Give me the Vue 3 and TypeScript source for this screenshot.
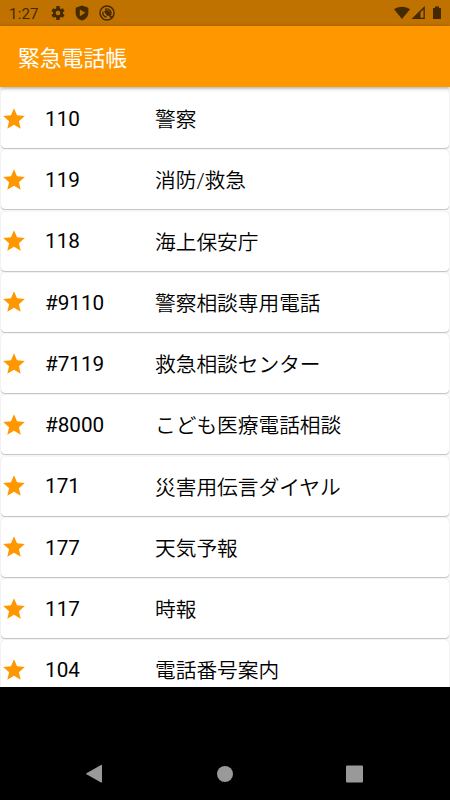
<script setup lang="ts">
interface Contact {
  number: string
  name: string
}

const contacts: Contact[] = [
  { number: '110', name: '警察' },
  { number: '119', name: '消防/救急' },
  { number: '118', name: '海上保安庁' },
  { number: '#9110', name: '警察相談専用電話' },
  { number: '#7119', name: '救急相談センター' },
  { number: '#8000', name: 'こども医療電話相談' },
  { number: '171', name: '災害用伝言ダイヤル' },
  { number: '177', name: '天気予報' },
  { number: '117', name: '時報' },
  { number: '104', name: '電話番号案内' },
]
</script>

<template>
  <div class="phone">
    <div class="status">
      <span class="time">1:27</span>
      <svg class="s-icon" viewBox="0 0 24 24">
        <path
          fill-rule="evenodd"
          d="M19.400 13c.1-.3.100-.6.100-1s0-.7-.1-1l2.100-1.600c.2-.2.300-.4.100-.7l-2-3.400c-.1-.2-.4-.3-.6-.2l-2.500 1c-.5-.4-1.100-.7-1.700-1L14.400 2c0-.3-.2-.5-.5-.5h-3.900c-.2 0-.5.2-.5.500L9.200 5.100c-.6.3-1.200.6-1.700 1L5 5.100c-.2-.1-.5 0-.6.2l-2 3.400c-.1.300 0 .5.100.7L4.600 11c0 .3-.1.700-.1 1s0 .7.100 1l-2.100 1.600c-.2.200-.2.500-.1.700l2 3.400c.1.200.4.300.6.200l2.500-1c.5.4 1.100.7 1.700 1l.3 3.100c0 .3.300.5.500.5h3.900c.3 0 .5-.2.500-.5l.4-3.100c.6-.3 1.200-.6 1.700-1l2.500 1c.2.100.5 0 .6-.2l2-3.400c.1-.2.100-.5-.1-.7zM12 15.500a3.500 3.500 0 1 1 0-7 3.500 3.500 0 0 1 0 7z"
        />
      </svg>
      <svg class="s-icon" viewBox="0 0 24 24">
        <path fill-rule="evenodd" d="M12 .8 2.500 4v8c0 5.600 4 9.700 9.500 11.300 5.500-1.600 9.500-5.700 9.500-11.300V4zM8.700 6.800l8.300 5-8.300 5z" />
      </svg>
      <svg class="s-icon" viewBox="0 0 24 24">
        <circle cx="12" cy="12" r="10.500" fill="none" stroke="currentColor" stroke-width="2.200" />
        <path d="M11.500 18.200A6.300 6.300 0 0 1 6 10M17.300 15A6.300 6.300 0 0 0 9 6.500" fill="none" stroke="currentColor" stroke-width="2" />
        <path d="M7.500 9.500 11 7.500q4 0 5.500 3.500v3.500l4 4-2 2-4-4.500H12z" />
      </svg>
      <span class="spacer"></span>
      <svg class="signals" viewBox="0 0 50 16">
        <path d="M1 4.300C5.500.8 12.500.8 17 4.300L9 14z" />
        <path fill-rule="evenodd" d="M18.500 14 31.800 1v13zM27.500 7.200v5.500h3V4.400z" />
        <path d="M40 3h2V1.500h4V3h2v11h-8z" />
      </svg>
    </div>
    <header class="app-bar">緊急電話帳</header>
    <main class="list">
      <div v-for="c in contacts" :key="c.number" class="card">
        <svg class="star" viewBox="0 0 24 24">
          <path d="M12 17.270 18.180 21l-1.640-7.030L22 9.240l-7.190-.61L12 2 9.190 8.630 2 9.240l5.460 4.730L5.820 21z" />
        </svg>
        <span class="number">{{ c.number }}</span>
        <span class="name">{{ c.name }}</span>
      </div>
    </main>
    <nav class="nav">
      <svg viewBox="0 0 18 20"><path d="M.5 9.200 15 1q1-.5 1 .7v16q0 1.200-1 .7L.5 10.200q-.8-.5 0-1z" /></svg>
      <svg viewBox="0 0 18 20"><circle cx="9" cy="10" r="8" /></svg>
      <svg viewBox="0 0 18 20"><rect x="0" y="1.500" width="17" height="17" rx="1" /></svg>
    </nav>
  </div>
</template>

<style>
body {
  margin: 0;
  background: #000;
}
</style>

<style scoped>
.phone {
  width: 450px;
  height: 800px;
  overflow: hidden;
  display: flex;
  flex-direction: column;
  background: #000;
  font-family: Roboto, 'Noto Sans CJK JP', sans-serif;
}
.status {
  flex: none;
  height: 26px;
  box-sizing: border-box;
  padding: 0 7px 0 9px;
  display: flex;
  align-items: center;
  background: #bf7200;
  color: #452a00;
  fill: currentColor;
}
.time {
  width: 41px;
  padding-top: 2px;
  font-size: 15px;
  line-height: 18px;
  letter-spacing: 0.2px;
}
.s-icon {
  width: 16px;
  height: 16px;
  margin-right: 8.400px;
}
.spacer {
  flex: 1;
}
.signals {
  width: 50px;
  height: 16px;
}
.app-bar {
  flex: none;
  height: 61px;
  box-sizing: border-box;
  padding: 0 18px;
  display: flex;
  align-items: center;
  background: #ff9800;
  color: #fff;
  font-size: 21.800px;
  position: relative;
  box-shadow: 0 1px 4px rgba(0, 0, 0, 0.35);
}
.list {
  flex: none;
  height: 600.400px;
  box-sizing: border-box;
  padding: 2px 1px 0;
  overflow: hidden;
  display: flex;
  flex-direction: column;
  gap: 2.250px;
  background: #fafafa;
}
.card {
  flex: none;
  height: 59px;
  box-sizing: border-box;
  padding: 0;
  display: flex;
  align-items: center;
  background: #fff;
  border-radius: 4px;
  box-shadow: 0 1px 1px rgba(0, 0, 0, 0.22), 0 0 1px rgba(0, 0, 0, 0.15);
  color: #000;
  font-size: 20.700px;
  line-height: 30px;
}
.star {
  width: 26px;
  height: 26px;
  margin-right: 18px;
  fill: #ff9800;
}
.number {
  width: 110px;
  padding-top: 0.500px;
}
.name {
  padding-top: 3px;
  white-space: nowrap;
  font-weight: 350;
}
.nav {
  flex: 1;
  padding: 77px 86px 0;
  display: flex;
  justify-content: space-between;
  align-items: flex-start;
}
.nav svg {
  width: 18px;
  height: 20px;
  fill: #999;
}
</style>
